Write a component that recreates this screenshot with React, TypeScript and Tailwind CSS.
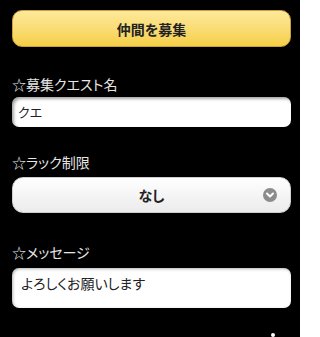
const font = {
  fontFamily: '"Noto Sans CJK JP", "Noto Sans", sans-serif',
  fontFeatureSettings: '"palt"',
}

const Label = ({ text, className }: { text: string; className: string }) => (
  <p className={`text-[14px] leading-[20px] text-[#e6e6e6] ${className}`}>{text}</p>
)

export default function App() {
  return (
    <div className="w-[300px] h-[337px] bg-black overflow-hidden relative" style={font}>
      <div className="pl-3 pr-[9px] pt-[10px] flex flex-col">
        <button className="h-[37px] w-full rounded-[10px] bg-gradient-to-b from-[#fde99a] to-[#f6cf45] text-[14px] font-bold text-[#222] border border-[#c9a33a] pt-[2px]">
          仲間を募集
        </button>

        <Label text="☆募集クエスト名" className="mt-[27px]" />
        <div className="mt-[3px] h-[30px] rounded-[7px] bg-white shadow-[inset_2px_2px_3px_rgba(0,0,0,0.35)] flex items-center px-[6px] text-[13px] text-[#222]">
          クエ
        </div>

        <Label text="☆ラック制限" className="mt-[25px]" />
        <div className="mt-[5px] h-[36px] rounded-[11px] bg-gradient-to-b from-white to-[#ebebeb] border border-[#cfcfcf] relative flex items-center justify-center">
          <span className="text-[14px] font-bold text-[#222]">なし</span>
          <span className="absolute right-[13px] top-1/2 -translate-y-1/2 w-[14px] h-[14px] rounded-full bg-[#8c8c8c] flex items-center justify-center">
            <svg width="8" height="6" viewBox="0 0 8 6">
              <path d="M1 1.5 L4 4.5 L7 1.5" stroke="white" strokeWidth="2" fill="none" strokeLinecap="round" strokeLinejoin="round" />
            </svg>
          </span>
        </div>

        <Label text="☆メッセージ" className="mt-[29px]" />
        <div className="mt-[6px] h-[40px] rounded-[7px] bg-white shadow-[inset_1px_1px_3px_rgba(0,0,0,0.3)] px-[9px] pt-[6px] text-[14px] leading-[18px] text-[#222]">
          よろしくお願いします
        </div>
      </div>
      <span className="absolute left-[271px] top-[333px] w-[4px] h-[4px] rounded-full bg-white" />
    </div>
  )
}
